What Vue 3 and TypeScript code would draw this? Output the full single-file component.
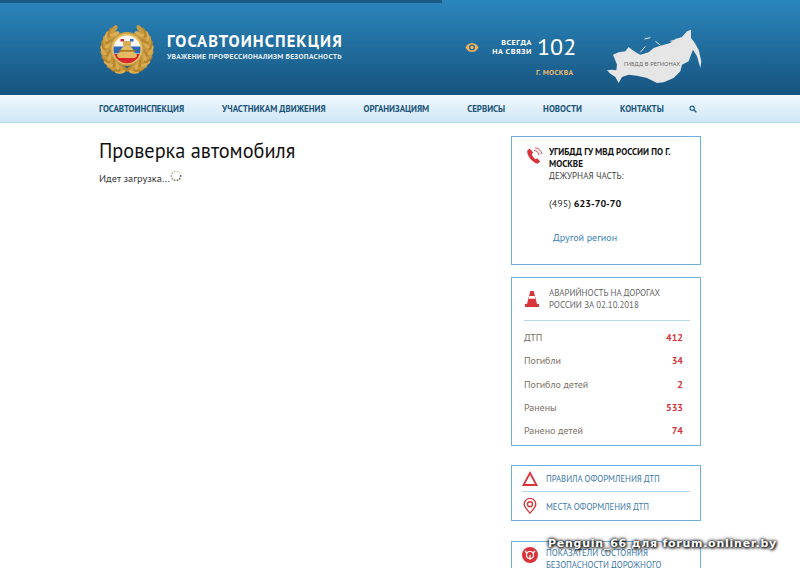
<template>
  <div class="page">
    <header class="top">
      <div class="top-line"></div>
      <div class="wrap top-inner">
        <svg class="emblem" viewBox="0 0 56 52">
          <ellipse
            v-for="(l, i) in leaves"
            :key="i"
            :cx="l.x"
            :cy="l.y"
            rx="5.200"
            ry="2.300"
            :fill="l.c"
            :transform="`rotate(${l.r} ${l.x} ${l.y})`"
          />
          <circle cx="28" cy="26" r="17" fill="#c89a3f" />
          <circle cx="28" cy="26" r="15.500" fill="#e7bd62" />
          <circle cx="28" cy="26" r="13.500" fill="#f7f7f7" />
          <path d="M14.800 23.500h26.400a13.500 13.500 0 0 1 .3 2.500 13.500 13.500 0 0 1-.5 4.500H15a13.500 13.500 0 0 1-.5-4.500 13.500 13.500 0 0 1 .3-2.500z" fill="#2f69b3" />
          <path d="M15.200 31h25.600a13.500 13.500 0 0 1-25.600 0z" fill="#d6282e" />
          <path d="M18 33c0-2.500 1.500-3.500 3.500-4 0-3.500 2.500-6 6.500-6s6.500 2.500 6.500 6c2 .5 3.500 1.500 3.500 4l-2 2H20z" fill="#e6bb60" />
          <rect x="20" y="27" width="16" height="1.800" rx="0.900" fill="#a87c2c" />
          <rect x="24" y="18" width="8" height="5" rx="1.500" fill="#d6ab52" />
          <rect x="21.500" y="16" width="3.500" height="2.500" fill="#d6282e" />
          <rect x="31" y="16" width="3.500" height="2.500" fill="#2f69b3" />
        </svg>
        <div class="brand">
          <div class="brand-title">ГОСАВТОИНСПЕКЦИЯ</div>
          <div class="brand-sub">УВАЖЕНИЕ ПРОФЕССИОНАЛИЗМ БЕЗОПАСНОСТЬ</div>
        </div>
        <div class="hotline">
          <div class="hotline-row">
            <svg class="eye" viewBox="0 0 16 12">
              <path d="M0.500 6C3 1.800 5.500 0.800 8 0.800S13 1.800 15.500 6C13 10.200 10.500 11.200 8 11.200S3 10.200 0.500 6z" fill="#eeb45c" />
              <circle cx="8" cy="6" r="3.400" fill="#25689c" />
              <circle cx="8" cy="6" r="1.900" fill="#eeb45c" />
            </svg>
            <div class="always">ВСЕГДА<br />НА СВЯЗИ</div>
            <div class="num">102</div>
          </div>
          <div class="city">Г. МОСКВА</div>
        </div>
        <div class="russia">
          <svg viewBox="500 85 291 171">
            <path d="M500 212L515 210 528 212 530 195 522 175 518 165 535 158 555 155 565 142 575 150 590 160 600 165 625 158 640 145 660 138 690 130 705 118 725 112 740 95 752 90 752 115 762 128 775 150 783 185 780 205 770 170 758 150 752 165 745 185 725 195 720 215 700 235 670 248 650 250 620 235 590 228 565 225 545 232 535 250 525 232 510 222z" fill="#e6e6e6" />
            <path d="M600 158L615 140M645 125L660 136M690 125L700 122M612 118L630 114" stroke="#e6e6e6" stroke-width="3" fill="none" />
          </svg>
          <span class="russia-label">ГИБДД В РЕГИОНАХ</span>
        </div>
      </div>
    </header>

    <nav class="nav">
      <div class="wrap nav-inner">
        <a v-for="item in menu" :key="item">{{ item }}</a>
        <svg class="search" viewBox="0 0 10 10">
          <circle cx="4" cy="4" r="2.700" fill="none" stroke="#1d6593" stroke-width="1.500" />
          <path d="M6 6l3.200 3.200" stroke="#1d6593" stroke-width="1.800" />
        </svg>
      </div>
    </nav>

    <div class="wrap content">
      <main class="main">
        <h1>Проверка автомобиля</h1>
        <div class="loading">
          Идет загрузка...
          <svg class="spinner" viewBox="0 0 12 12">
            <circle v-for="d in dots" :key="d.x" :cx="d.x" :cy="d.y" r="1" :fill="d.c" />
          </svg>
        </div>
      </main>

      <aside class="side">
        <section class="card phone-card">
          <svg class="ico-phone" viewBox="0 0 18 18">
            <path d="M3.500 1.500L1.300 3.500C0.500 8 5.500 15 11.500 16.800L14.200 14.600L11.300 11.300L9.600 12.200C7.800 11 6.300 8.900 5.800 6.900L7.300 5.500z" fill="#d8343a" />
            <path d="M8 3.200A6 6 0 0 1 13.200 8M9 0.800A8.500 8.500 0 0 1 16 7" fill="none" stroke="#d8343a" stroke-width="0.900" />
          </svg>
          <div class="phone-text">
            <div class="org">УГИБДД ГУ МВД РОССИИ ПО Г. МОСКВЕ</div>
            <div class="duty">ДЕЖУРНАЯ ЧАСТЬ:</div>
            <div class="tel">(495) <b>623-70-70</b></div>
            <a class="region">Другой регион</a>
          </div>
        </section>

        <section class="card stats-card">
          <div class="stats-head">
            <svg class="ico-cone" viewBox="0 0 16 18">
              <path d="M6.300 1h3.400l3.300 13H15v3H1v-3h2z" fill="#d8343a" />
              <path d="M5.400 6h5.200l.7 2.800H4.700z" fill="#fff" />
            </svg>
            <div>АВАРИЙНОСТЬ НА ДОРОГАХ<br />РОССИИ ЗА 02.10.2018</div>
          </div>
          <div class="stat-list">
            <div v-for="row in stats" :key="row.label" class="stat">
              <span>{{ row.label }}</span>
              <b>{{ row.value }}</b>
            </div>
          </div>
        </section>

        <section class="card links-card">
          <a class="link">
            <svg class="ico-link" viewBox="0 0 16 16">
              <path d="M8 2L14.500 14H1.500z" fill="none" stroke="#d8343a" stroke-width="1.800" />
            </svg>
            ПРАВИЛА ОФОРМЛЕНИЯ ДТП
          </a>
          <a class="link">
            <svg class="ico-link" viewBox="0 0 16 18">
              <path d="M8 17C4 12.500 1.500 10 1.500 7a6.500 6.500 0 0 1 13 0C14.500 10 12 12.500 8 17z" fill="none" stroke="#d8343a" stroke-width="1.500" />
              <circle cx="8" cy="7" r="2.800" fill="none" stroke="#d8343a" stroke-width="1.500" />
            </svg>
            МЕСТА ОФОРМЛЕНИЯ ДТП
          </a>
        </section>

        <section class="card safety-card">
          <svg class="ico-safety" viewBox="0 0 16 16">
            <circle cx="8" cy="8" r="8" fill="#d8343a" />
            <circle cx="8" cy="8" r="3.500" fill="none" stroke="#fff" stroke-width="1.200" />
            <path d="M8 8V13M3 4l2 2M13 4l-2 2" stroke="#fff" stroke-width="1.200" />
          </svg>
          <div>ПОКАЗАТЕЛИ СОСТОЯНИЯ<br />БЕЗОПАСНОСТИ ДОРОЖНОГО</div>
        </section>
      </aside>
    </div>

    <div class="watermark">Penguin_66 для forum.onliner.by</div>
  </div>
</template>

<script setup lang="ts">
const menu = ['ГОСАВТОИНСПЕКЦИЯ', 'УЧАСТНИКАМ ДВИЖЕНИЯ', 'ОРГАНИЗАЦИЯМ', 'СЕРВИСЫ', 'НОВОСТИ', 'КОНТАКТЫ']

const stats = [
  { label: 'ДТП', value: 412 },
  { label: 'Погибли', value: 34 },
  { label: 'Погибло детей', value: 2 },
  { label: 'Ранены', value: 533 },
  { label: 'Ранено детей', value: 74 }
]

// листья венка: две ветки снизу вверх, по два ряда на ветку
const leaves = [-1, 1].flatMap((side) =>
  Array.from({ length: 24 }, (_, i) => {
    const a = 0.2 + (i / 23) * 2.35
    const outer = i % 2 === 1
    const rad = outer ? 23.500 : 19.500
    const x = 28 + side * Math.sin(a) * rad
    const y = 26 + Math.cos(a) * rad
    const tangent = (Math.atan2(-Math.sin(a), side * Math.cos(a)) * 180) / Math.PI
    return {
      x,
      y,
      r: tangent + side * (outer ? 22 : -22),
      c: i % 3 === 0 ? '#b8862f' : i % 3 === 1 ? '#dcae55' : '#c99a40'
    }
  })
)

// точки спиннера по кругу, от тёмной к светлой
const dots = Array.from({ length: 10 }, (_, i) => {
  const a = (i / 10) * Math.PI * 2
  const g = 105 + i * 14
  return { x: 6 + Math.cos(a) * 4.600, y: 6 + Math.sin(a) * 4.600, c: `rgb(${g},${g},${g - 25})` }
})
</script>

<style scoped>
.page {
  position: relative;
  width: 800px;
  height: 568px;
  overflow: hidden;
  background: #fff;
  font-family: "PT Sans", "Noto Sans", sans-serif;
  color: #222;
}

.wrap {
  width: 602px;
  margin-left: 99px;
}

.top {
  height: 95px;
  background: linear-gradient(#2a86bc, #17547f);
}

.top-line {
  width: 442px;
  height: 3px;
  background: #1d5b85;
}

.top-inner {
  display: flex;
  height: 92px;
  align-items: flex-start;
}

.emblem {
  flex: none;
  width: 56px;
  height: 52px;
  margin-top: 20px;
}

.brand {
  flex: none;
  width: 298px;
  margin: 28px 0 0 12px;
  color: #fff;
}

.brand-title {
  font-size: 16.500px;
  font-weight: 700;
  letter-spacing: 1.100px;
  line-height: 20px;
}

.brand-sub {
  font-size: 7.500px;
  font-weight: 600;
  letter-spacing: 0.270px;
  line-height: 10px;
  color: #e3edf4;
}

.hotline {
  flex: none;
  width: 142px;
  margin-top: 29px;
  color: #fff;
}

.hotline-row {
  display: flex;
  align-items: center;
}

.eye {
  flex: none;
  width: 14px;
  height: 11px;
}

.always {
  width: 53px;
  font-size: 8px;
  font-weight: 600;
  letter-spacing: 0.600px;
  line-height: 9.500px;
  text-align: right;
}

.num {
  margin-left: 5px;
  font-size: 24px;
  line-height: 30px;
}

.city {
  margin: 5px 0 0 71px;
  font-size: 7.500px;
  font-weight: 700;
  letter-spacing: 0.300px;
  line-height: 10px;
  color: #e6b66c;
}

.russia {
  position: relative;
  flex: none;
  width: 97px;
  height: 57px;
  margin-top: 25px;
}

.russia svg {
  display: block;
  width: 97px;
  height: 57px;
}

.russia-label {
  position: absolute;
  left: 17px;
  top: 32px;
  font-size: 6.300px;
  white-space: nowrap;
  color: #666;
}

.nav {
  box-sizing: border-box;
  height: 28px;
  background: linear-gradient(#f0f8fd, #cfe7f6);
  border-bottom: 1px solid #b5d7ec;
}

.nav-inner {
  display: flex;
  align-items: center;
  gap: 38px;
  height: 27px;
}

.nav a {
  font-size: 8.900px;
  font-weight: 700;
  white-space: nowrap;
  color: #1a5479;
}

.search {
  width: 8px;
  height: 8px;
  margin-left: -13px;
}

.content {
  display: flex;
  justify-content: space-between;
}

.main {
  width: 400px;
}

h1 {
  margin: 16px 0 0;
  font-size: 20.300px;
  font-weight: 400;
  line-height: 24px;
  color: #111;
}

.loading {
  display: flex;
  align-items: flex-start;
  margin-top: 9px;
  font-size: 10.350px;
  line-height: 13px;
  color: #333;
}

.spinner {
  width: 12px;
  height: 12px;
  margin: -2px 0 0 0;
}

.side {
  display: flex;
  flex-direction: column;
  width: 190px;
  padding-top: 13px;
}

.card {
  box-sizing: border-box;
  flex: none;
  width: 190px;
  border: 1px solid #6eaedc;
  background: #fff;
}

.phone-card {
  display: flex;
  height: 129px;
  padding: 9px 12px;
}

.ico-phone {
  flex: none;
  width: 18px;
  height: 18px;
  margin: 1px 5px 0 2px;
}

.phone-text {
  font-size: 9px;
  line-height: 12px;
}

.org {
  font-weight: 700;
  color: #111;
}

.duty {
  color: #444;
}

.tel {
  margin-top: 16px;
  font-size: 10.100px;
  color: #333;
}

.tel b {
  color: #111;
}

.region {
  display: block;
  margin: 22px 0 0 4px;
  font-size: 10px;
  color: #3780b5;
}

.stats-card {
  height: 169px;
  margin-top: 12px;
  padding: 0 10px 0 12px;
}

.stats-head {
  display: flex;
  height: 42px;
  align-items: center;
  border-bottom: 1px solid #b5d7ec;
  font-size: 8.900px;
  line-height: 12px;
  color: #666;
}

.ico-cone {
  flex: none;
  width: 16px;
  height: 18px;
  margin-right: 9px;
}

.stat-list {
  padding-top: 5px;
}

.stat {
  display: flex;
  justify-content: space-between;
  align-items: center;
  height: 23.300px;
  padding-right: 7px;
  font-size: 10px;
  color: #7b6f66;
}

.stat b {
  color: #d4343a;
}

.links-card {
  height: 56px;
  margin-top: 19px;
  padding: 0 10px;
}

.link {
  box-sizing: border-box;
  display: flex;
  align-items: center;
  gap: 8px;
  height: 25px;
  font-size: 8.700px;
  color: #3c78a8;
}

.link + .link {
  height: 29px;
  border-top: 1px solid #b5d7ec;
}

.ico-link {
  flex: none;
  width: 16px;
  height: 16px;
}

.safety-card {
  display: flex;
  gap: 8px;
  height: 60px;
  margin-top: 20px;
  padding: 5px 10px;
  font-size: 8.700px;
  line-height: 11.500px;
  color: #3c78a8;
}

.ico-safety {
  flex: none;
  width: 16px;
  height: 16px;
}

.watermark {
  position: absolute;
  left: 548px;
  top: 537px;
  font-family: "DejaVu Sans", sans-serif;
  font-size: 11px;
  font-weight: 700;
  letter-spacing: 0.750px;
  color: #fff;
  white-space: nowrap;
  text-shadow: 0 0 3px #000, 0 0 4px #000, 1px 1px 3px #000;
}
</style>
